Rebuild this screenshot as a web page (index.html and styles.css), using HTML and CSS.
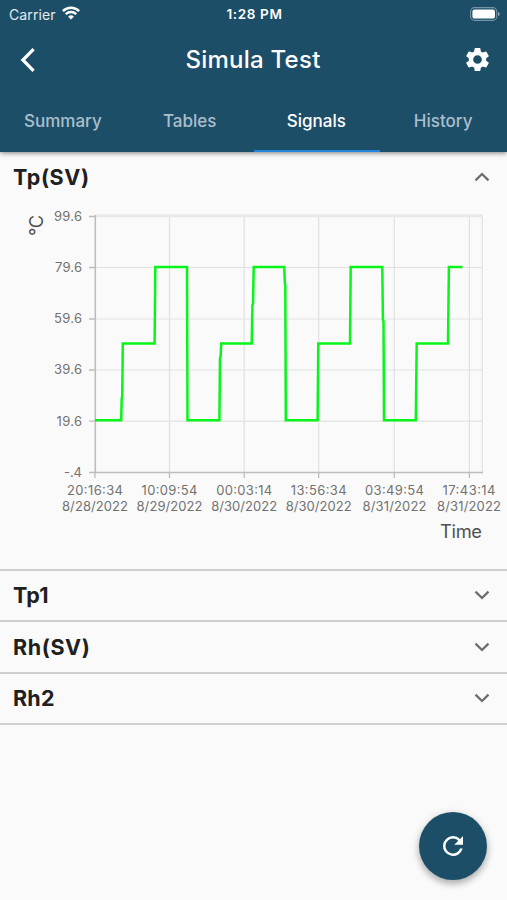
FILE: index.html
```html
<!DOCTYPE html>
<html lang="en">
<head>
<meta charset="utf-8">
<meta name="viewport" content="width=device-width, initial-scale=1">
<title>Simula Test</title>
<link rel="stylesheet" href="styles.css">
</head>
<body>
<header class="header">
  <div class="status">
    <div class="carrier"><span>Carrier</span>
      <svg width="18" height="14" viewBox="0 0 18 14" fill="none" stroke="#fff" stroke-width="2.4"><path d="M.9 5.1a11.5 11.5 0 0 1 16.2 0M3.8 8.2a7.4 7.4 0 0 1 10.4 0"/><path d="M9 13.6 6.1 10.7a4.1 4.1 0 0 1 5.8 0z" fill="#fff" stroke="none"/></svg>
    </div>
    <span class="clock">1:28 PM</span>
    <svg class="battery" width="30" height="14" viewBox="0 0 30 14"><rect x=".6" y=".6" width="26.2" height="12.8" rx="4" fill="none" stroke="#fff" stroke-opacity=".4" stroke-width="1.1"/><rect x="2.4" y="2.4" width="22.6" height="9.2" rx="2.2" fill="#fff"/><path d="M28 5v4q1.7-.6 1.7-2T28 5" fill="#fff" fill-opacity=".5"/></svg>
  </div>
  <div class="titlebar">
    <svg class="back" width="16" height="24" viewBox="0 0 16 24" fill="none" stroke="#fff" stroke-width="3.2"><path d="M13.6 1.2 2.9 12l10.7 10.8"/></svg>
    <h1>Simula Test</h1>
    <svg class="gear" width="29" height="29" viewBox="0 0 24 24" fill="#fff"><path d="M19.14 12.94c.04-.3.06-.61.06-.94s-.02-.64-.07-.94l2.03-1.58c.18-.14.23-.41.12-.61l-1.92-3.32c-.12-.22-.37-.29-.59-.22l-2.39.96c-.5-.38-1.03-.7-1.62-.94l-.36-2.54c-.04-.24-.24-.41-.48-.41h-3.84c-.24 0-.43.17-.47.41l-.36 2.54c-.59.24-1.13.57-1.62.94l-2.39-.96c-.22-.08-.47 0-.59.22L2.74 8.87c-.12.21-.08.47.12.61l2.03 1.58c-.05.3-.09.63-.09.94s.02.64.07.94l-2.03 1.58c-.18.14-.23.41-.12.61l1.92 3.32c.12.22.37.29.59.22l2.39-.96c.5.38 1.03.7 1.62.94l.36 2.54c.05.24.24.41.48.41h3.84c.24 0 .44-.17.47-.41l.36-2.54c.59-.24 1.13-.56 1.62-.94l2.39.96c.22.08.47 0 .59-.22l1.92-3.32c.12-.22.07-.47-.12-.61zM12 15.6A3.6 3.6 0 1 1 12 8.4a3.6 3.6 0 0 1 0 7.2z"/></svg>
  </div>
  <nav class="tabs"><span>Summary</span><span>Tables</span><span class="active">Signals</span><span>History</span></nav>
</header>
<main>
  <section class="panel open">
    <div class="row"><h2 class="wide">Tp(SV)</h2><svg class="chev" width="16" height="10" viewBox="0 0 16 10"><path d="M1.5 8.3 8 2l6.5 6.3"/></svg></div>
    <svg class="chart" width="507" height="366" viewBox="0 203 507 366">
      <g class="grid">
        <path d="M95 267.5H482M95 319H482M95 370H482M95 421.2H482M169.5 216V472M244.2 216V472M318.7 216V472M394.3 216V472M469.4 216V472M482.3 215V472"/>
        <path class="top" d="M95 215.8H483"/>
      </g>
      <path class="ticks" d="M89 216.5H95M89 267.5H95M89 319H95M89 370H95M89 421.2H95M89 472.5H95M95 472V478M169.5 472V478M244.2 472V478M318.7 472V478M394.3 472V478M469.4 472V478"/>
      <path class="axis" d="M95.3 215V472.5H483"/>
      <path class="signal" d="M95 420.2H121.2L121.7 398 122.2 397 122.8 343.5H154.6L155.3 267H187L187.5 420.2H219.4L220 358 220.6 357 221.2 343.5H251.7L252.4 305 253 304 253.7 267H284.2L284.9 284 285.3 285 285.8 420.2H317.6L318.3 343.5H350L350.7 267H382.3L382.9 320 383.5 321 384 420.2H415.8L416.7 343.5H448L448.9 267H462.5"/>
      <g class="labels end">
        <text x="82" y="221" textLength="28">99.6</text><text x="82" y="272" textLength="27">79.6</text><text x="82" y="323.3" textLength="28">59.6</text><text x="82" y="374.3" textLength="28">39.6</text><text x="82" y="425.7" textLength="25.5">19.6</text><text x="82" y="477" textLength="18">-.4</text>
      </g>
      <g class="labels mid">
        <text x="95" y="494.5" textLength="56">20:16:34</text><text x="95" y="510.7" textLength="66">8/28/2022</text>
        <text x="169.5" y="494.5" textLength="56">10:09:54</text><text x="169.5" y="510.7" textLength="66">8/29/2022</text>
        <text x="244.2" y="494.5" textLength="56">00:03:14</text><text x="244.2" y="510.7" textLength="66">8/30/2022</text>
        <text x="318.7" y="494.5" textLength="56">13:56:34</text><text x="318.7" y="510.7" textLength="66">8/30/2022</text>
        <text x="394.5" y="494.5" textLength="59">03:49:54</text><text x="394.5" y="510.7" textLength="64">8/31/2022</text>
        <text x="469" y="494.5" textLength="53">17:43:14</text><text x="469" y="510.7" textLength="64">8/31/2022</text>
      </g>
      <text class="name" x="440" y="537.5" textLength="42">Time</text>
      <text class="name" transform="translate(42.5 236) rotate(-90)" textLength="21">°C</text>
    </svg>
  </section>
  <section class="panel"><div class="row"><h2>Tp1</h2><svg class="chev" width="16" height="10" viewBox="0 0 16 10"><path d="M1.5 1.7 8 8l6.5-6.3"/></svg></div></section>
  <section class="panel"><div class="row"><h2 class="wide">Rh(SV)</h2><svg class="chev" width="16" height="10" viewBox="0 0 16 10"><path d="M1.5 1.7 8 8l6.5-6.3"/></svg></div></section>
  <section class="panel"><div class="row"><h2>Rh2</h2><svg class="chev" width="16" height="10" viewBox="0 0 16 10"><path d="M1.5 1.7 8 8l6.5-6.3"/></svg></div></section>
</main>
<button class="fab" aria-label="Refresh"><svg width="30" height="30" viewBox="0 0 24 24" fill="#fff"><path d="M17.65 6.35A7.96 7.96 0 0 0 12 4a8 8 0 1 0 7.73 10h-2.08A6 6 0 1 1 12 6c1.66 0 3.14.69 4.22 1.78L13 11h7V4l-2.35 2.35z"/></svg></button>
</body>
</html>
```

FILE: styles.css
```css
* { box-sizing: border-box; }
body {
  margin: 0;
  height: 900px;
  overflow: hidden;
  background: #fafafa;
  color: #202020;
  font-family: Inter, "Liberation Sans", sans-serif;
}
h1, h2 { margin: 0; }
svg { display: block; flex: none; }
.header {
  position: relative;
  height: 152px;
  background: #1d4e68;
  color: #fff;
  box-shadow: 0 1px 5px rgba(0, 0, 0, .5);
}
.status {
  display: grid;
  grid-template-columns: 1fr auto 1fr;
  align-items: center;
  height: 28px;
  padding: 0 7px 0 9px;
  font-size: 13.5px;
}
.carrier { display: flex; align-items: center; gap: 6px; color: #e3eaee; font-size: 14px; letter-spacing: .1px; }
.carrier svg { margin-top: -3px; }
.clock { font-weight: 600; font-size: 13.5px; letter-spacing: .65px; }
.battery { justify-self: end; margin-top: -1px; }
.titlebar {
  display: grid;
  grid-template-columns: 1fr auto 1fr;
  align-items: center;
  height: 63px;
  padding: 0 15px 0 20px;
}
.titlebar h1 { font-size: 24px; font-weight: 500; letter-spacing: .25px; line-height: 30px; margin-left: -6px; }
.gear { justify-self: end; }
.tabs { display: grid; grid-template-columns: repeat(4, 1fr); height: 61px; }
.tabs span {
  display: flex;
  align-items: center;
  justify-content: center;
  padding: 1px 1px 0 0;
  border-bottom: 2px solid transparent;
  color: #a9bfcb;
  font-size: 17px;
  font-weight: 500;
}
.tabs .active { color: #fff; border-color: #2585dc; }
.panel { border-bottom: 2px solid #cfcfcf; }
.row {
  display: flex;
  align-items: center;
  justify-content: space-between;
  height: 49.4px;
  padding: 0 17px 1px 13px;
}
.row h2 { font-size: 21.5px; font-weight: 700; letter-spacing: .2px; }
.row h2.wide { letter-spacing: .6px; }
.open .row { height: 51px; }
.chev path { fill: none; stroke: #6d6d6d; stroke-width: 2.3; }
.chart { font-family: Inter, "Liberation Sans", sans-serif; }
.grid path { fill: none; stroke: #e1e1e1; stroke-width: 1.2; }
.grid .top { stroke: #e9e9e9; stroke-width: 3; }
.ticks { stroke: #bdbdbd; stroke-width: 1.3; }
.axis { fill: none; stroke: #bdbdbd; stroke-width: 1.6; }
.signal { fill: none; stroke: #08f51b; stroke-width: 2.5; }
.labels { font-size: 13px; fill: #727272; }
.end { text-anchor: end; }
.mid { text-anchor: middle; }
.name { font-size: 18.3px; fill: #505050; }
.fab {
  position: absolute;
  left: 419px;
  top: 812px;
  width: 68px;
  height: 68px;
  display: flex;
  align-items: center;
  justify-content: center;
  padding: 0;
  border: 0;
  border-radius: 50%;
  background: #1d4e68;
  box-shadow: 0 4px 7px rgba(0, 0, 0, .26), 0 1px 10px rgba(0, 0, 0, .1);
}
```
